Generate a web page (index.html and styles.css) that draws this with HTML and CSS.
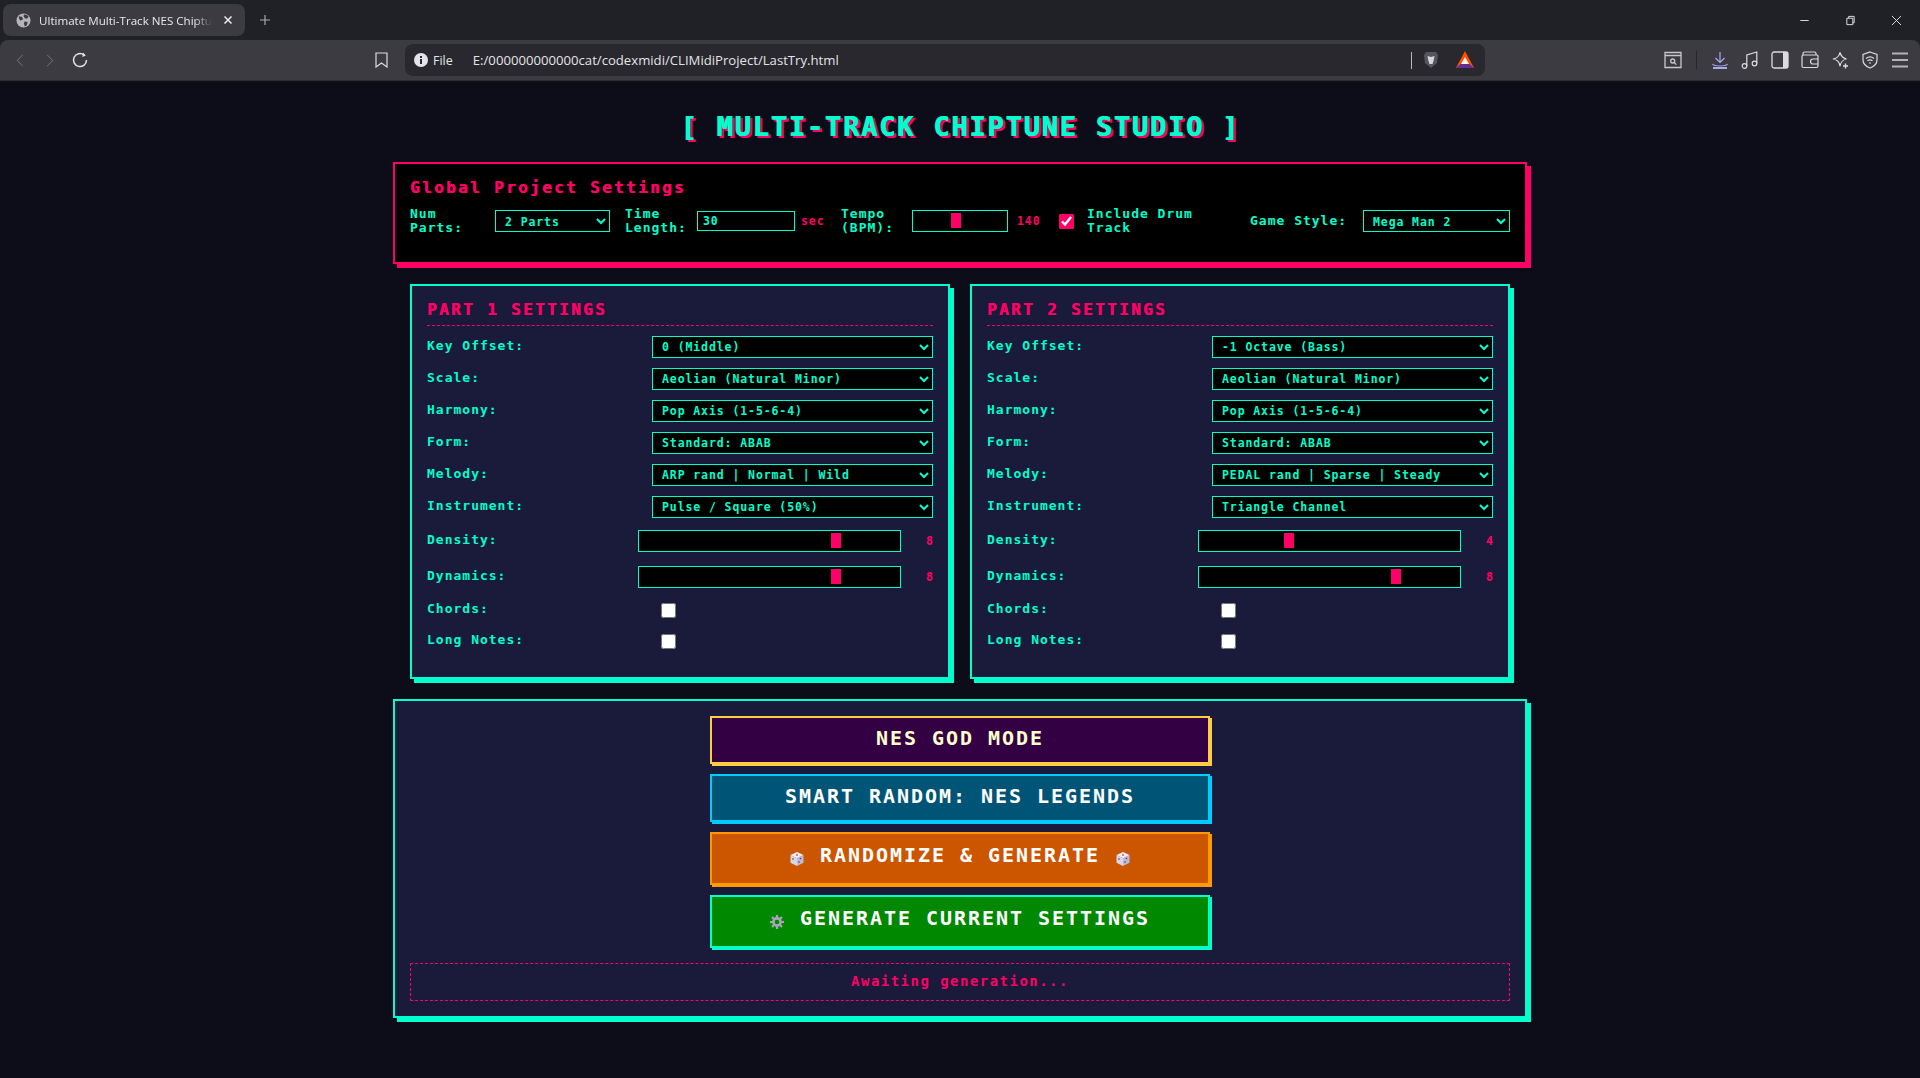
FILE: index.html
```html
<!DOCTYPE html>
<html lang="en">
<head>
<meta charset="utf-8">
<title>Ultimate Multi-Track NES Chiptune Studio</title>
<link rel="stylesheet" href="styles.css">
</head>
<body>
<header class="browser">
  <div class="tabstrip">
    <div class="tab">
      <svg class="fav" viewBox="0 0 16 16"><circle cx="8" cy="8" r="7.5" fill="#b4b4ba"/><path d="M3 3.500l3 .5 1.500 2-1 1.500-2 .5-1-1.500zM8.500 1.500l3 .5 2 2-2 2-2-.5-1.500-2zM9 9l3.500.5-1 3.500-2 1.500-1-3z" fill="#3a3a40"/></svg>
      <span class="tab-title">Ultimate Multi-Track NES Chiptu</span>
      <svg class="tab-x" viewBox="0 0 10 10"><path d="M1.500 1.500l7 7M8.500 1.500l-7 7" stroke="#e8e8ea" stroke-width="1.600" fill="none"/></svg>
    </div>
    <svg class="plus" viewBox="0 0 12 12"><path d="M6 1v10M1 6h10" stroke="#a8a8ae" stroke-width="1.200" fill="none"/></svg>
    <div class="winctl">
      <svg viewBox="0 0 12 12"><path d="M1.500 6h9" stroke="#e8e8ea" stroke-width="1" fill="none"/></svg>
      <svg viewBox="0 0 12 12"><path d="M2 3.500h6.500v7H2zM4 3.500V1.500h6v7H8.500" stroke="#e8e8ea" stroke-width="1" fill="none"/></svg>
      <svg viewBox="0 0 12 12"><path d="M1 1l10 10M11 1L1 11" stroke="#e8e8ea" stroke-width="1" fill="none"/></svg>
    </div>
  </div>
  <div class="toolbar">
    <svg class="nav-back" viewBox="0 0 10 16"><path d="M8.500 1L1.500 8l7 7" stroke="#77777d" stroke-width="1.200" fill="none"/></svg>
    <svg class="nav-fwd" viewBox="0 0 10 16"><path d="M1.500 1l7 7-7 7" stroke="#77777d" stroke-width="1.200" fill="none"/></svg>
    <svg class="nav-reload" viewBox="0 0 18 18"><path d="M15.500 9A6.500 6.500 0 1 1 13 3.900" stroke="#e4e4e8" stroke-width="1.500" fill="none"/><path d="M12 1.500l2.800 3-3.400 1.600z" fill="#e4e4e8"/></svg>
    <svg class="bookmark" viewBox="0 0 13 16"><path d="M1 1h11v14l-5.500-4L1 15z" stroke="#dcdce0" stroke-width="1.200" fill="none"/></svg>
    <div class="urlbar">
      <svg class="info" viewBox="0 0 14 14"><circle cx="7" cy="7" r="7" fill="#e4e4e8"/><path d="M6 6h2v5H6zM6 3h2v2H6z" fill="#28282e"/></svg>
      <span class="url-file">File</span>
      <span class="url-text">E:/000000000000cat/codexmidi/CLIMidiProject/LastTry.html</span>
      <span class="url-sep"></span>
      <svg class="brave" viewBox="0 0 16 18"><path d="M3 1h10l2 3-1 8-6 5-6-5-1-8z" fill="#55555f"/><path d="M4.500 5l3.500 1 3.500-1-1 5-1 3H6.500l-1-3z" fill="#d8d8dc"/></svg>
      <svg class="bat" viewBox="0 0 18 18"><path d="M9 0l9 17H0z" fill="#ff5000"/><path d="M0 17l4.500-4h9l4.500 4z" fill="#662d91"/><path d="M9 6l4 7H5z" fill="#f4f4f4"/></svg>
    </div>
    <div class="tools">
      <svg viewBox="0 0 18 18"><path d="M1 1.500h16v15H1zM1 4.500h16" stroke="#c8c8cc" stroke-width="1.300" fill="none"/><circle cx="8.700" cy="10" r="2" stroke="#c8c8cc" stroke-width="1.300" fill="none"/><path d="M10.500 11.800l1.800 1.800" stroke="#c8c8cc" stroke-width="1.300"/></svg>
      <span class="tool-sep"></span>
      <svg viewBox="0 0 18 18"><path d="M9 1v10M4.500 7L9 11.500 13.500 7M1.500 13c1 1.500 2.500 2 7.500 2s6.500-.5 7.500-2" stroke="#a9a9ee" stroke-width="1.200" fill="none"/><path d="M2 17h14" stroke="#a9a9ee" stroke-width="2"/></svg>
      <svg viewBox="0 0 18 18"><circle cx="3.500" cy="15" r="2.300" stroke="#dcdce0" stroke-width="1.200" fill="none"/><circle cx="13.500" cy="12.500" r="2.300" stroke="#dcdce0" stroke-width="1.200" fill="none"/><path d="M5.800 15V4l10-3v11.500" stroke="#dcdce0" stroke-width="1.200" fill="none"/></svg>
      <svg viewBox="0 0 18 18"><rect x="1" y="1" width="16" height="16" rx="2" stroke="#dcdce0" stroke-width="1.300" fill="none"/><path d="M12 1h4a1 1 0 0 1 1 1v14a1 1 0 0 1-1 1h-4z" fill="#dcdce0"/></svg>
      <svg viewBox="0 0 18 18"><path d="M2 4V2.500A1.500 1.500 0 0 1 3.500 1h10A1.500 1.500 0 0 1 15 2.500V4M1 5.500A1.500 1.500 0 0 1 2.500 4H16a1 1 0 0 1 1 1v10a1.500 1.500 0 0 1-1.500 1.500h-13A1.500 1.500 0 0 1 1 15zM17 8h-5a2 2 0 0 0 0 5h5" stroke="#dcdce0" stroke-width="1.200" fill="none"/></svg>
      <svg viewBox="0 0 18 18"><path d="M8 1.500c1 4 2.500 5.500 6.500 6.500-4 1-5.500 2.500-6.500 7-1-4.500-2.500-6-7-7 4.500-1 6-2.500 7-6.500z" stroke="#dcdce0" stroke-width="1.200" fill="none" transform="translate(1 0)"/><path d="M14.500 12.500v5M12 15h5" stroke="#dcdce0" stroke-width="1.400"/></svg>
      <svg viewBox="0 0 18 18"><path d="M9 1l7 2.500V9c0 4-3 6.500-7 8-4-1.500-7-4-7-8V3.500z" stroke="#dcdce0" stroke-width="1.200" fill="none"/><path d="M5 7.500c2.500-2 5.500-2 8 0M6.500 9.700c1.700-1.200 3.300-1.200 5 0M8 12h2" stroke="#dcdce0" stroke-width="1.100" fill="none"/></svg>
      <svg viewBox="0 0 18 18"><path d="M1 2.500h16M1 9h16M1 15.500h16" stroke="#b4b4b8" stroke-width="2" fill="none"/></svg>
    </div>
  </div>
</header>

<main class="studio">
  <h1 class="title">[ MULTI-TRACK CHIPTUNE STUDIO ]</h1>

  <section class="global">
    <h2 class="global-head">Global Project Settings</h2>
    <div class="global-row">
      <label class="lbl g-parts">Num Parts:</label>
      <select class="sel g-sel g-parts-sel"><option>2 Parts</option></select>
      <label class="lbl g-time">Time Length:</label>
      <input class="num g-time-in" type="text" value="30">
      <span class="val g-sec">sec</span>
      <label class="lbl g-tempo">Tempo (BPM):</label>
      <input class="rng g-tempo-in" type="range" min="60" max="240" value="140">
      <span class="val g-bpm">140</span>
      <input class="chk g-drum-chk" type="checkbox" checked>
      <label class="lbl g-drum">Include Drum Track</label>
      <label class="lbl g-style">Game Style:</label>
      <select class="sel g-sel g-style-sel"><option>Mega Man 2</option></select>
    </div>
  </section>

  <div class="parts">
    <section class="part">
      <h2 class="part-head">PART 1 SETTINGS</h2>
      <div class="row"><label class="lbl lbl-sel">Key Offset:</label><select class="sel sel-wide"><option>0 (Middle)</option></select></div>
      <div class="row"><label class="lbl lbl-sel">Scale:</label><select class="sel sel-wide"><option>Aeolian (Natural Minor)</option></select></div>
      <div class="row"><label class="lbl lbl-sel">Harmony:</label><select class="sel sel-wide"><option>Pop Axis (1-5-6-4)</option></select></div>
      <div class="row"><label class="lbl lbl-sel">Form:</label><select class="sel sel-wide"><option>Standard: ABAB</option></select></div>
      <div class="row"><label class="lbl lbl-sel">Melody:</label><select class="sel sel-wide"><option>ARP rand | Normal | Wild</option></select></div>
      <div class="row row-last"><label class="lbl lbl-sel">Instrument:</label><select class="sel sel-wide"><option>Pulse / Square (50%)</option></select></div>
      <div class="row row-range"><label class="lbl lbl-rng">Density:</label><input class="rng rng-wide" type="range" min="1" max="10" value="8"><span class="val val-end">8</span></div>
      <div class="row row-range"><label class="lbl lbl-rng">Dynamics:</label><input class="rng rng-wide" type="range" min="1" max="10" value="8"><span class="val val-end">8</span></div>
      <div class="row row-chk"><label class="lbl lbl-sel">Chords:</label><input class="chk chk-part" type="checkbox"></div>
      <div class="row row-chk"><label class="lbl lbl-sel">Long Notes:</label><input class="chk chk-part" type="checkbox"></div>
    </section>
    <section class="part">
      <h2 class="part-head">PART 2 SETTINGS</h2>
      <div class="row"><label class="lbl lbl-sel">Key Offset:</label><select class="sel sel-wide"><option>-1 Octave (Bass)</option></select></div>
      <div class="row"><label class="lbl lbl-sel">Scale:</label><select class="sel sel-wide"><option>Aeolian (Natural Minor)</option></select></div>
      <div class="row"><label class="lbl lbl-sel">Harmony:</label><select class="sel sel-wide"><option>Pop Axis (1-5-6-4)</option></select></div>
      <div class="row"><label class="lbl lbl-sel">Form:</label><select class="sel sel-wide"><option>Standard: ABAB</option></select></div>
      <div class="row"><label class="lbl lbl-sel">Melody:</label><select class="sel sel-wide"><option>PEDAL rand | Sparse | Steady</option></select></div>
      <div class="row row-last"><label class="lbl lbl-sel">Instrument:</label><select class="sel sel-wide"><option>Triangle Channel</option></select></div>
      <div class="row row-range"><label class="lbl lbl-rng">Density:</label><input class="rng rng-wide" type="range" min="1" max="10" value="4"><span class="val val-end">4</span></div>
      <div class="row row-range"><label class="lbl lbl-rng">Dynamics:</label><input class="rng rng-wide" type="range" min="1" max="10" value="8"><span class="val val-end">8</span></div>
      <div class="row row-chk"><label class="lbl lbl-sel">Chords:</label><input class="chk chk-part" type="checkbox"></div>
      <div class="row row-chk"><label class="lbl lbl-sel">Long Notes:</label><input class="chk chk-part" type="checkbox"></div>
    </section>
  </div>

  <section class="actions">
    <button class="btn btn-god">NES GOD MODE</button>
    <button class="btn btn-smart">SMART RANDOM: NES LEGENDS</button>
    <button class="btn btn-rand btn-tall">
      <svg class="emoji" viewBox="0 0 14 14"><path d="M7 0l6.500 3L7 6.200.5 3z" fill="#f0eef2"/><path d="M.5 3L7 6.200V14L.5 10.800z" fill="#d8d6e6"/><path d="M13.500 3L7 6.200V14l6.500-3.200z" fill="#bdbad2"/><circle cx="7" cy="3" r="1" fill="#e0505a"/><circle cx="3" cy="7" r=".8" fill="#443a7a"/><circle cx="10.500" cy="6.500" r=".8" fill="#443a7a"/><circle cx="9" cy="10" r=".8" fill="#443a7a"/></svg>
      <span class="btn-label btn-label-both">RANDOMIZE &amp; GENERATE</span>
      <svg class="emoji" viewBox="0 0 14 14"><path d="M7 0l6.500 3L7 6.200.5 3z" fill="#f0eef2"/><path d="M.5 3L7 6.200V14L.5 10.800z" fill="#d8d6e6"/><path d="M13.500 3L7 6.200V14l6.500-3.200z" fill="#bdbad2"/><circle cx="7" cy="3" r="1" fill="#e0505a"/><circle cx="3" cy="7" r=".8" fill="#443a7a"/><circle cx="10.500" cy="6.500" r=".8" fill="#443a7a"/><circle cx="9" cy="10" r=".8" fill="#443a7a"/></svg>
    </button>
    <button class="btn btn-gen btn-tall">
      <svg class="emoji" viewBox="0 0 14 14"><circle cx="7" cy="7" r="3.600" fill="none" stroke="#a9a6bb" stroke-width="2.600"/><path d="M7 0v2.500M7 11.500V14M0 7h2.500M11.500 7H14M2 2l1.800 1.800M10.200 10.200L12 12M12 2l-1.800 1.800M3.800 10.200L2 12" stroke="#a9a6bb" stroke-width="2.200"/></svg>
      <span class="btn-label">GENERATE CURRENT SETTINGS</span>
    </button>
    <div class="status">Awaiting generation...</div>
  </section>
</main>
</body>
</html>
```
FILE: styles.css
```css
* { box-sizing: border-box; }
html, body { margin: 0; padding: 0; }
body {
  height: 1078px;
  overflow: hidden;
  background: #0d0d1a;
  font-family: "DejaVu Sans Mono", "Liberation Mono", monospace;
  color: #00ffcc;
}

/* browser chrome */
.browser { height: 81px; background: #202127; font-family: "Open Sans", "Liberation Sans", sans-serif; }
.tabstrip { height: 40px; display: flex; align-items: center; padding-left: 3px; }
.tab { width: 242px; height: 32px; background: #3b3b41; border-radius: 8px; display: flex; align-items: center; padding: 0 13px; }
.fav { width: 15px; height: 15px; flex: none; }
.tab-title { width: 174px; margin-left: 8px; font-size: 11.600px; color: #e8e8ea; white-space: nowrap; -webkit-mask-image: linear-gradient(to right, #000 90%, transparent); mask-image: linear-gradient(to right, #000 90%, transparent); }
.tab-x { width: 10px; height: 10px; flex: none; margin-left: 11px; }
.plus { width: 12px; height: 12px; margin-left: 14px; }
.winctl { margin-left: auto; display: flex; gap: 35px; padding-right: 18px; }
.winctl svg { width: 11px; height: 11px; }
.toolbar { height: 41px; background: #3b3b41; border-radius: 8px 8px 0 0; border-bottom: 1px solid #2c2c32; display: flex; align-items: center; padding: 0 11px 0 16px; }
.nav-back, .nav-fwd { width: 8px; height: 15px; flex: none; }
.nav-fwd { margin-left: 22px; }
.nav-reload { width: 18px; height: 18px; margin-left: 17px; flex: none; }
.bookmark { width: 13px; height: 16px; margin-left: 286px; flex: none; }
.urlbar { width: 1080px; height: 32px; margin-left: 17px; background: #28282e; border-radius: 8px; display: flex; align-items: center; padding-left: 9px; flex: none; color: #e4e4e8; font-size: 13.150px; }
.info { width: 14px; height: 14px; flex: none; }
.url-file { margin-left: 5px; font-size: 12.500px; }
.url-text { margin-left: 20px; flex: 1; white-space: nowrap; }
.url-sep { width: 1px; height: 17px; background: #b8b8bc; }
.brave { width: 16px; height: 18px; margin-left: 11px; flex: none; }
.bat { width: 18px; height: 18px; margin: 0 11px 0 17px; flex: none; }
.tools { margin-left: auto; display: flex; align-items: center; gap: 12px; }
.tools svg { width: 18px; height: 18px; flex: none; }
.tool-sep { width: 1px; height: 18px; background: #26262b; margin: 0 2px; }

/* page */
.studio { width: 1134px; margin: 0 auto; }
.title { margin: 30px 0 21px; font-size: 27px; line-height: 31px; height: 30px; font-weight: 700; text-align: center; letter-spacing: 1.800px; color: #00ffcc; text-shadow: 1px 0 0 #00ffcc, 2px 2px 0 #ff0066, 3px 2px 0 #ff0066; }

.global { height: 102px; background: #000; border: 2px solid #ff0066; box-shadow: 4px 4px 0 #ff0066; padding: 15px; margin-bottom: 20px; }
.global-head { margin: 0 0 10px; font-size: 16px; line-height: 18px; font-weight: 700; letter-spacing: 2.370px; color: #ff0066; text-shadow: .5px 0 0 #ff0066; }
.global-row { display: flex; align-items: center; height: 28px; }

.lbl { font-size: 13px; line-height: 14px; font-weight: 700; letter-spacing: 1px; color: #00ffcc; flex: none; }
.sel { height: 22px; background: #000; color: #00ffcc; border: 1px solid #00ffcc; border-radius: 0; padding: 0 5px; font-family: inherit; font-size: 11.500px; font-weight: 700; letter-spacing: .9px; flex: none; outline: none; }
.g-sel { padding-top: 2px; }
.num { height: 20px; background: #000; color: #00ffcc; border: 1px solid #00ffcc; padding: 0 5px; font-family: inherit; font-size: 11.500px; font-weight: 700; letter-spacing: .9px; flex: none; outline: none; border-radius: 0; }
.val { font-size: 11.500px; font-weight: 700; letter-spacing: .9px; color: #ff0066; flex: none; }
.rng { -webkit-appearance: none; appearance: none; height: 22px; margin: 0; padding: 5px; background: #000; border: 1px solid #00ffcc; flex: none; }
.rng::-webkit-slider-runnable-track { background: transparent; height: 10px; }
.rng::-webkit-slider-thumb { -webkit-appearance: none; appearance: none; width: 10px; height: 15px; margin-top: -3px; background: #ff0066; border: 0; border-radius: 0; }
.chk { width: 15px; height: 15px; margin: 0; flex: none; accent-color: #ff0066; }

.g-parts { width: 85px; }
.g-parts-sel { width: 115px; }
.g-time { width: 72px; margin-left: 15px; }
.g-time-in { width: 98px; }
.g-sec { width: 25px; margin-left: 6px; }
.g-tempo { width: 71px; margin-left: 15px; }
.g-tempo-in { width: 96px; }
.g-bpm { width: 24px; margin-left: 9px; }
.g-drum-chk { margin-left: 18px; }
.g-drum { width: 130px; margin-left: 13px; }
.g-style { width: 113px; margin-left: 33px; }
.g-style-sel { width: 147px; }

.parts { display: grid; grid-template-columns: 540px 540px; gap: 20px; padding: 0 17px; margin-bottom: 20px; }
.part { height: 395px; background: #1a1a3a; border: 2px solid #00ffcc; box-shadow: 4px 4px 0 #00ffcc; padding: 12px 15px; }
.part-head { margin: 0 0 10px; padding-bottom: 4px; border-bottom: 1px dashed #ff0066; font-size: 16px; line-height: 23px; font-weight: 700; letter-spacing: 2.370px; color: #ff0066; text-shadow: .5px 0 0 #ff0066; }
.row { display: flex; align-items: center; height: 22px; margin-bottom: 10px; }
.row-last { margin-bottom: 12px; }
.row-range { margin-bottom: 14px; }
.row-range:nth-last-child(3) { margin-bottom: 11px; }
.row-chk { margin-bottom: 9px; }
.lbl-sel { width: 225px; padding-bottom: 2px; }
.lbl-rng { width: 211px; padding-bottom: 2px; }
.sel-wide { width: 281px; }
.rng-wide { width: 263px; }
.val-end { margin-left: auto; letter-spacing: 0; }
.chk-part { margin-left: 9px; }

.actions { height: 319px; background: #1a1a3a; border: 2px solid #00ffcc; box-shadow: 4px 4px 0 #00ffcc; padding: 15px; display: flex; flex-direction: column; align-items: center; }
.btn { width: 500px; height: 48px; flex: none; margin-bottom: 10px; padding: 0 0 4px; border: 2px solid; font-family: inherit; font-size: 20px; font-weight: 700; letter-spacing: 1.960px; color: #fff; display: flex; align-items: center; justify-content: center; }
.btn-tall { height: 53px; padding-bottom: 7px; }
.btn-god { background: #330044; border-color: #ffcc44; color: #ffffcc; box-shadow: 2px 2px 0 #ffcc44; }
.btn-smart { background: #005577; border-color: #00ccff; box-shadow: 2px 2px 0 #00ccff; }
.btn-rand { background: #cc5500; border-color: #ff9900; box-shadow: 2px 2px 0 #ff9900; }
.btn-gen { background: #008800; border-color: #00ffcc; box-shadow: 2px 2px 0 #00ffcc; margin-bottom: 15px; }
.btn-label { margin-left: 16px; }
.btn-label-both { margin-right: 16px; }
.emoji { width: 14px; height: 14px; flex: none; position: relative; top: 4px; }
.status { width: 100%; height: 38px; padding-bottom: 2px; border: 1px dashed #ff0066; display: flex; align-items: center; justify-content: center; font-size: 14px; font-weight: 700; letter-spacing: 1.470px; color: #ff0066; }
```
